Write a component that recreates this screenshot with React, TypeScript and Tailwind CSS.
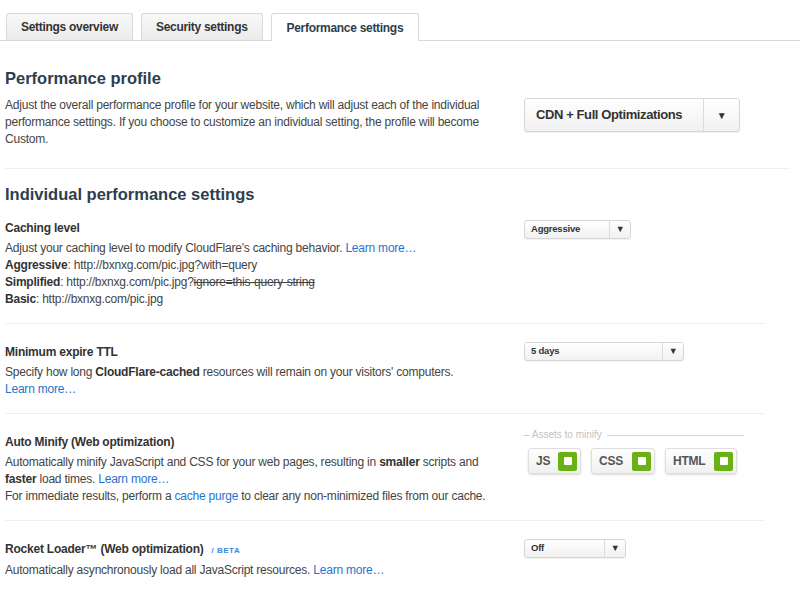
import React from "react";

const font = { fontFamily: '"Liberation Sans", Arial, sans-serif' };

function Tab({ label, active }: { label: string; active?: boolean }) {
  return (
    <div
      className={
        active
          ? "relative -mb-px flex h-[28px] items-center rounded-t-[3px] border border-b-0 border-[#d9d9d9] bg-white px-[15px] text-[12px] font-bold tracking-[-0.3px] text-[#2c3e50]"
          : "flex h-[27px] items-center rounded-t-[3px] border border-b-0 border-[#d9d9d9] bg-gradient-to-b from-[#f9f9f9] to-[#ebebeb] px-[14px] text-[12px] font-bold tracking-[-0.3px] text-[#333]"
      }
    >
      {label}
    </div>
  );
}

function Select({ value, width, big }: { value: string; width: string; big?: boolean }) {
  return (
    <div
      className={`flex ${width} ${big ? "h-[34px]" : "h-[19px]"} items-stretch rounded-[3px] border border-[#d6d6d6] bg-gradient-to-b from-white to-[#f1f1f1] shadow-[0_1px_1px_rgba(0,0,0,0.06)]`}
    >
      <div
        className={`flex flex-1 items-center whitespace-nowrap ${big ? "pl-[11px] text-[13px] tracking-[-0.4px]" : "pl-[6px] text-[9.5px]"} font-bold text-[#333]`}
      >
        {value}
      </div>
      <div
        className={`flex ${big ? "w-[36px] text-[10px]" : "w-[21px] text-[9px]"} items-center justify-center border-l border-[#dcdcdc] text-[#333]`}
      >
        ▼
      </div>
    </div>
  );
}

function MinifyButton({ label, width }: { label: string; width: string }) {
  return (
    <div
      className={`flex h-[26px] ${width} items-center justify-between rounded-[3px] border border-[#dedede] bg-gradient-to-b from-white to-[#f0f0f0] pl-[7px] pr-[3px] shadow-[0_1px_2px_rgba(0,0,0,0.15)]`}
    >
      <span className="text-[12px] font-bold text-[#555]">{label}</span>
      <span className="flex h-[19px] w-[19px] items-center justify-center rounded-[2px] bg-[#6ab213]">
        <span className="h-[8px] w-[8px] rounded-[1px] bg-white" />
      </span>
    </div>
  );
}

function Link({ children }: { children: React.ReactNode }) {
  return <span className="text-[#1f74d0]">{children}</span>;
}

function Item({
  title,
  beta,
  children,
  right,
  last,
}: {
  title: string;
  beta?: boolean;
  children: React.ReactNode;
  right?: React.ReactNode;
  last?: boolean;
}) {
  return (
    <div
      className={`flex w-[760px] pt-[20px] pb-[15px] ${last ? "" : "border-b border-[#efefef]"}`}
    >
      <div className="w-[519px] shrink-0 pr-[24px]">
        <div className="mb-[3px] flex items-baseline text-[12px] leading-[17px] font-bold text-[#333]">
          {title}
          {beta && (
            <span className="ml-[8px] text-[8px] font-bold tracking-[0.5px] text-[#3a8ad8]">/ BETA</span>
          )}
        </div>
        <div className="text-[12px] leading-[17px] text-[#444]">{children}</div>
      </div>
      <div className="flex-1">{right}</div>
    </div>
  );
}

export default function App() {
  return (
    <div className="min-h-[600px] w-[800px] bg-white tracking-[-0.22px]" style={font}>
      {/* tabs */}
      <div className="flex items-end gap-[8px] border-b border-[#d9d9d9] bg-white pt-[13px] pl-[6px]">
        <Tab label="Settings overview" />
        <Tab label="Security settings" />
        <Tab label="Performance settings" active />
      </div>

      <div className="pl-[5px]">
        {/* profile */}
        <div className="w-[785px] border-b border-[#efefef] pt-[26px] pb-[20px]">
          <h2 className="mb-[8px] text-[16.5px] leading-[22px] font-bold tracking-normal text-[#2d3e4f]">
            Performance profile
          </h2>
          <div className="flex">
            <p className="w-[519px] shrink-0 pr-[25px] text-[12px] leading-[17px] text-[#444]">
              Adjust the overall performance profile for your website, which will adjust each of the individual
              performance settings. If you choose to customize an individual setting, the profile will become
              Custom.
            </p>
            <div className="pt-[1px]">
              <Select value="CDN + Full Optimizations" width="w-[216px]" big />
            </div>
          </div>
        </div>

        {/* individual */}
        <h2 className="pt-[14px] text-[16.5px] leading-[22px] font-bold tracking-normal text-[#2d3e4f]">
          Individual performance settings
        </h2>

        <div className="-mt-[5px]">
          <Item title="Caching level" right={<Select value="Aggressive" width="w-[107px]" />}>
            <div>
              Adjust your caching level to modify CloudFlare's caching behavior. <Link>Learn more…</Link>
            </div>
            <div>
              <b className="text-[#333]">Aggressive</b>: http://bxnxg.com/pic.jpg?with=query
            </div>
            <div>
              <b className="text-[#333]">Simplified</b>: http://bxnxg.com/pic.jpg?
              <span className="line-through">ignore=this-query-string</span>
            </div>
            <div>
              <b className="text-[#333]">Basic</b>: http://bxnxg.com/pic.jpg
            </div>
          </Item>

          <Item
            title="Minimum expire TTL"
            right={
              <div className="-mt-[2px]">
                <Select value="5 days" width="w-[160px]" />
              </div>
            }
          >
            <div>
              Specify how long <b className="text-[#333]">CloudFlare-cached</b> resources will remain on your
              visitors' computers.
            </div>
            <div>
              <Link>Learn more…</Link>
            </div>
          </Item>

          <Item
            title="Auto Minify (Web optimization)"
            right={
              <div className="-mt-[6px] w-[220px]">
                <div className="flex items-center text-[10px] leading-[14px] tracking-normal text-[#c2c2c2]">
                  <span>– Assets to minify</span>
                  <span className="ml-[5px] h-px flex-1 bg-[#d6d6d6]" />
                </div>
                <div className="mt-[6px] flex gap-[10px] pl-[4px]">
                  <MinifyButton label="JS" width="w-[53px]" />
                  <MinifyButton label="CSS" width="w-[64px]" />
                  <MinifyButton label="HTML" width="w-[72px]" />
                </div>
              </div>
            }
          >
            <div>
              Automatically minify JavaScript and CSS for your web pages, resulting in{" "}
              <b className="text-[#333]">smaller</b> scripts and <b className="text-[#333]">faster</b> load times.{" "}
              <Link>Learn more…</Link>
            </div>
            <div>
              For immediate results, perform a <Link>cache purge</Link> to clear any non-minimized files from our
              cache.
            </div>
          </Item>

          <Item
            title="Rocket Loader™ (Web optimization)"
            beta
            last
            right={
              <div className="-mt-[2px]">
                <Select value="Off" width="w-[102px]" />
              </div>
            }
          >
            <div>
              Automatically asynchronously load all JavaScript resources. <Link>Learn more…</Link>
            </div>
          </Item>
        </div>
      </div>
    </div>
  );
}
